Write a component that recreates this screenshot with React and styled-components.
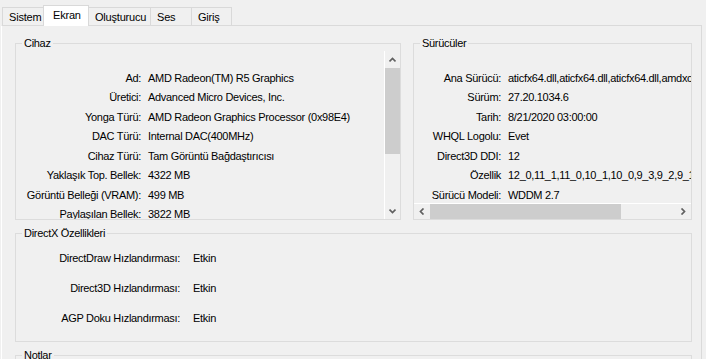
import React from "react";
import styled, { createGlobalStyle } from "styled-components";

const GlobalStyle = createGlobalStyle`
  html, body {
    margin: 0;
    padding: 0;
    background: #f0f0f0;
  }
  body {
    font-family: "Liberation Sans", Arial, sans-serif;
    font-size: 11px;
    letter-spacing: -0.3px;
    color: #000;
  }
`;

const tabs = [
  { name: "Sistem", width: 42 },
  { name: "Ekran", width: 46 },
  { name: "Oluşturucu", width: 63 },
  { name: "Ses", width: 42 },
  { name: "Giriş", width: 41 },
];

const device = [
  ["Ad:", "AMD Radeon(TM) R5 Graphics"],
  ["Üretici:", "Advanced Micro Devices, Inc."],
  ["Yonga Türü:", "AMD Radeon Graphics Processor (0x98E4)"],
  ["DAC Türü:", "Internal DAC(400MHz)"],
  ["Cihaz Türü:", "Tam Görüntü Bağdaştırıcısı"],
  ["Yaklaşık Top. Bellek:", "4322 MB"],
  ["Görüntü Belleği (VRAM):", "499 MB"],
  ["Paylaşılan Bellek:", "3822 MB"],
];

const drivers = [
  ["Ana Sürücü:", "aticfx64.dll,aticfx64.dll,aticfx64.dll,amdxc64.dll"],
  ["Sürüm:", "27.20.1034.6"],
  ["Tarih:", "8/21/2020 03:00:00"],
  ["WHQL Logolu:", "Evet"],
  ["Direct3D DDI:", "12"],
  ["Özellik", "12_0,11_1,11_0,10_1,10_0,9_3,9_2,9_1"],
  ["Sürücü Modeli:", "WDDM 2.7"],
];

const directx = [
  ["DirectDraw Hızlandırması:", "Etkin"],
  ["Direct3D Hızlandırması:", "Etkin"],
  ["AGP Doku Hızlandırması:", "Etkin"],
];

const Arrow = ({ dir }) => {
  const paths = {
    up: "M0.5 4.5 L3.5 1.5 L6.5 4.5",
    down: "M0.5 1.5 L3.5 4.5 L6.5 1.5",
    left: "M4.5 0.5 L1.5 3.5 L4.5 6.5",
    right: "M1.5 0.5 L4.5 3.5 L1.5 6.5",
  };
  const vertical = dir === "up" || dir === "down";
  return (
    <svg width={vertical ? 7 : 6} height={vertical ? 6 : 7} viewBox={vertical ? "0 0 7 6" : "0 0 6 7"}>
      <path d={paths[dir]} fill="none" stroke="#606060" strokeWidth="1.7" />
    </svg>
  );
};

const App = () => {
  return (
    <Window>
      <GlobalStyle />
      <TabBar>
        {tabs.map((t) => (
          <Tab key={t.name} $width={t.width} $active={t.name === "Ekran"}>
            {t.name}
          </Tab>
        ))}
      </TabBar>
      <Page>
        <TopRow>
          <Group $width={386}>
            <Legend>Cihaz</Legend>
            <ListBox>
              <InfoGrid $labelWidth={125}>
                {device.map(([k, v]) => (
                  <React.Fragment key={k}>
                    <Label>{k}</Label>
                    <Value>{v}</Value>
                  </React.Fragment>
                ))}
              </InfoGrid>
              <VScroll>
                <ScrollButton $v>
                  <Arrow dir="up" />
                </ScrollButton>
                <VThumb />
                <Track />
                <ScrollButton $v>
                  <Arrow dir="down" />
                </ScrollButton>
              </VScroll>
            </ListBox>
          </Group>
          <Group $width={279}>
            <Legend>Sürücüler</Legend>
            <DriverBox>
              <InfoGrid $labelWidth={87}>
                {drivers.map(([k, v]) => (
                  <React.Fragment key={k}>
                    <Label>{k}</Label>
                    <Value>{v}</Value>
                  </React.Fragment>
                ))}
              </InfoGrid>
              <HScroll>
                <ScrollButton>
                  <Arrow dir="left" />
                </ScrollButton>
                <HThumb />
                <Track />
                <ScrollButton>
                  <Arrow dir="right" />
                </ScrollButton>
              </HScroll>
            </DriverBox>
          </Group>
        </TopRow>
        <Group>
          <Legend>DirectX Özellikleri</Legend>
          <FeatureGrid>
            {directx.map(([k, v]) => (
              <React.Fragment key={k}>
                <Label>{k}</Label>
                <Value>{v}</Value>
              </React.Fragment>
            ))}
          </FeatureGrid>
        </Group>
        <Group>
          <Legend>Notlar</Legend>
          <NotesBody />
        </Group>
      </Page>
    </Window>
  );
};

export default App;

const Window = styled.div`
  width: 706px;
  height: 359px;
  overflow: hidden;
  background: #f0f0f0;
`;

const TabBar = styled.div`
  display: flex;
  align-items: flex-end;
  height: 25px;
  padding-left: 2px;
  position: relative;
  z-index: 1;
`;

const Tab = styled.div`
  box-sizing: border-box;
  width: ${(p) => p.$width}px;
  height: ${(p) => (p.$active ? "21px" : "18px")};
  margin-bottom: ${(p) => (p.$active ? "-1px" : "0")};
  margin-left: -1px;
  padding: 0 0 0 ${(p) => (p.$active ? "9px" : "6px")};
  padding-bottom: ${(p) => (p.$active ? "2px" : "0")};
  display: flex;
  align-items: center;
  border: 1px solid #d9d9d9;
  border-bottom: none;
  background: ${(p) => (p.$active ? "#ffffff" : "#f0f0f0")};
  font-size: 11px;
  letter-spacing: -0.2px;
  white-space: nowrap;
  &:first-child {
    margin-left: 0;
  }
`;

const Page = styled.div`
  box-sizing: border-box;
  width: 701px;
  margin-left: 1px;
  height: 340px;
  border-top: 1px solid #dadada;
  border-right: 1px solid #dadada;
  border-left: 1px solid #ffffff;
  padding: 11px 9px 0 13px;
  display: flex;
  flex-direction: column;
`;

const TopRow = styled.div`
  display: flex;
  gap: 12px;
`;

const Group = styled.fieldset`
  box-sizing: border-box;
  margin: 0 0 7px 0;
  padding: 0;
  min-width: 0;
  width: ${(p) => (p.$width ? `${p.$width}px` : "auto")};
  border: 1px solid #dcdcdc;
`;

const Legend = styled.legend`
  margin-left: 6px;
  padding: 0 2px;
  line-height: 13px;
  font-size: 11px;
`;

const ListBox = styled.div`
  display: flex;
  height: 168px;
  margin-top: 1px;
`;

const DriverBox = styled.div`
  display: flex;
  flex-direction: column;
  height: 168px;
  margin-top: 1px;
`;

const InfoGrid = styled.div`
  flex: 1;
  min-width: 0;
  min-height: 0;
  overflow: hidden;
  display: grid;
  grid-template-columns: ${(p) => p.$labelWidth}px max-content;
  grid-auto-rows: 19.5px;
  column-gap: 7px;
  align-items: center;
  align-content: start;
  padding-top: 17px;
  white-space: nowrap;
`;

const FeatureGrid = styled.div`
  display: grid;
  grid-template-columns: 164px max-content;
  grid-auto-rows: 30px;
  column-gap: 13px;
  align-items: center;
  padding: 3px 0 8px;
  white-space: nowrap;
`;

const Label = styled.span`
  text-align: right;
`;

const Value = styled.span``;

const VScroll = styled.div`
  width: 15px;
  border-left: 1px solid #ffffff;
  display: flex;
  flex-direction: column;
  background: #f0f0f0;
`;

const HScroll = styled.div`
  height: 15px;
  border-top: 1px solid #ffffff;
  display: flex;
  background: #f0f0f0;
`;

const ScrollButton = styled.div`
  flex: none;
  width: ${(p) => (p.$v ? "15px" : "16px")};
  height: ${(p) => (p.$v ? "17px" : "15px")};
  display: flex;
  align-items: center;
  justify-content: center;
`;

const VThumb = styled.div`
  height: 86px;
  background: #cdcdcd;
`;

const HThumb = styled.div`
  width: 191px;
  background: #cdcdcd;
`;

const Track = styled.div`
  flex: 1;
`;

const NotesBody = styled.div`
  height: 60px;
`;
